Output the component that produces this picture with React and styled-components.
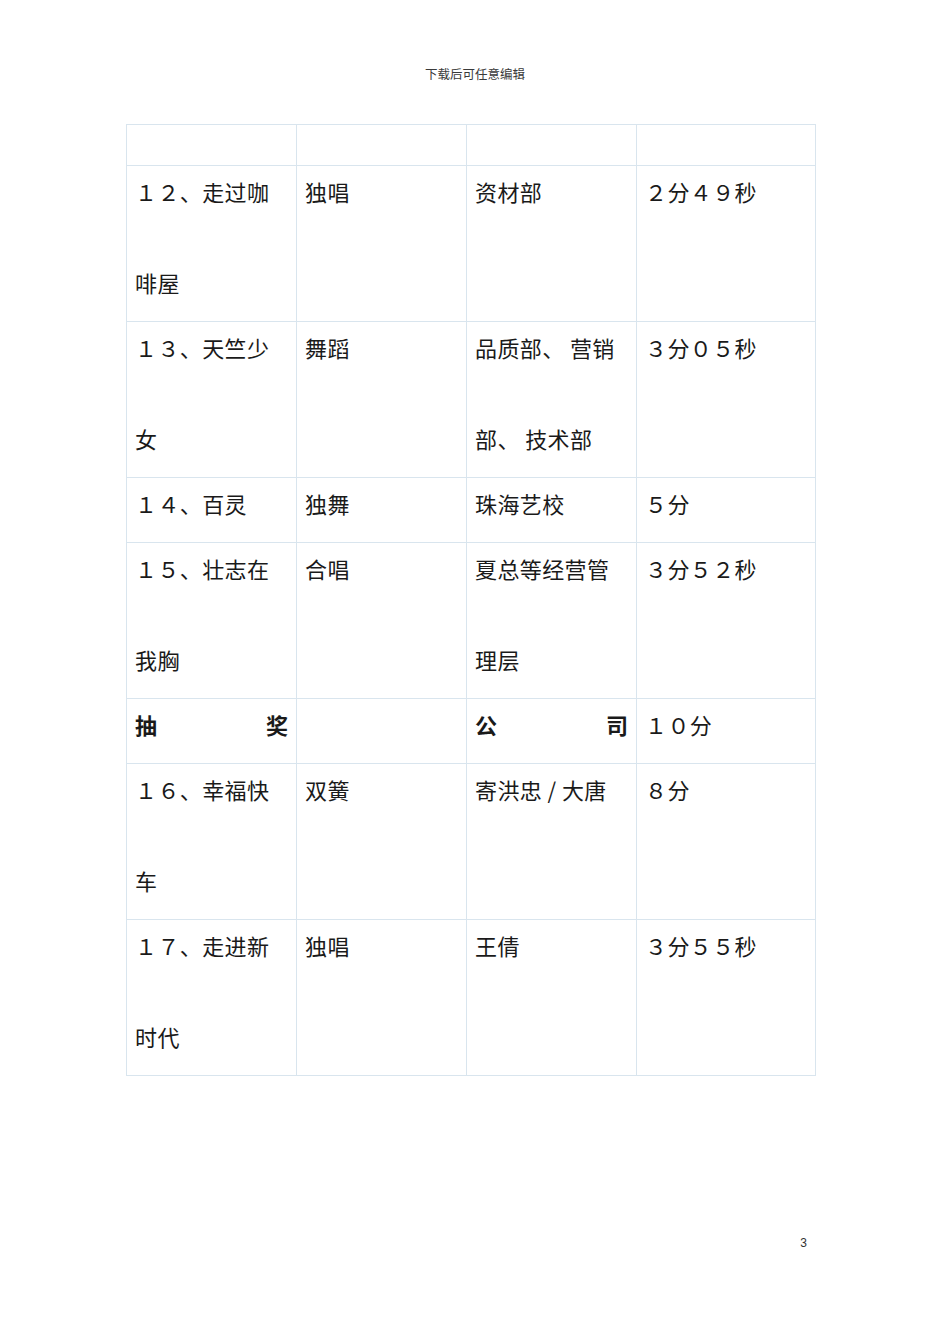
import React from "react";
import styled, { createGlobalStyle } from "styled-components";

const Global = createGlobalStyle`
  html, body { margin: 0; padding: 0; background: #ffffff; }
  body { font-family: "Noto Sans CJK SC", "Noto Sans", sans-serif; color: #1a1a1a; }
`;

const Page = styled.div`
  width: 950px;
  height: 1344px;
  display: flex;
  flex-direction: column;
  align-items: center;
  background: #fff;
`;

const Header = styled.div`
  margin-top: 66px;
  height: 18px;
  font-family: "Liberation Serif", "Noto Sans CJK SC", serif;
  font-size: 12.5px;
  line-height: 18px;
  color: #3a3a3a;
`;

const Table = styled.table`
  align-self: flex-start;
  margin-top: 40px;
  margin-left: 126px;
  border-collapse: collapse;
  table-layout: fixed;
  width: 689px;
`;

const Td = styled.td`
  border: 1px solid #d9e5ee;
  vertical-align: top;
  padding: ${(p) => (p.$empty ? "0" : "12px 8px 26px 8px")};
  font-size: 22px;
  line-height: 26px;
  height: ${(p) => (p.$empty ? "41px" : "auto")};
  box-sizing: border-box;
`;

const Lines = styled.div`
  display: flex;
  flex-direction: column;
  gap: 65px;
`;

const Line = styled.div`
  white-space: pre;
  letter-spacing: 0.4px;
`;

const Spread = styled.div`
  display: flex;
  justify-content: space-between;
  font-weight: 700;
  font-size: 22px;
  line-height: 26px;
`;

const Footer = styled.div`
  margin-top: auto;
  margin-bottom: 93px;
  align-self: flex-end;
  margin-right: 143px;
  font-family: "Liberation Sans", Arial, sans-serif;
  font-size: 12px;
  line-height: 16px;
  color: #333;
`;

const rows = [
  ["１２、走过咖|啡屋", "独唱", "资材部", "２分４９秒"],
  ["１３、天竺少|女", "舞蹈", "品质部、 营销|部、 技术部", "３分０５秒"],
  ["１４、百灵", "独舞", "珠海艺校", "５分"],
  ["１５、壮志在|我胸", "合唱", "夏总等经营管|理层", "３分５２秒"],
  [{ spread: ["抽", "奖"] }, "", { spread: ["公", "司"] }, "１０分"],
  ["１６、幸福快|车", "双簧", "寄洪忠 / 大唐", "８分"],
  ["１７、走进新|时代", "独唱", "王倩", "３分５５秒"],
];

function Cell({ value }) {
  if (value && typeof value === "object") {
    return (
      <Td>
        <Spread>
          <span>{value.spread[0]}</span>
          <span>{value.spread[1]}</span>
        </Spread>
      </Td>
    );
  }
  return (
    <Td>
      <Lines>
        {value.split("|").map((t, i) => (
          <Line key={i}>{t}</Line>
        ))}
      </Lines>
    </Td>
  );
}

export default function App() {
  return (
    <Page>
      <Global />
      <Header>下载后可任意编辑</Header>
      <Table>
        <colgroup>
          <col style={{ width: "170px" }} />
          <col style={{ width: "170px" }} />
          <col style={{ width: "170px" }} />
          <col style={{ width: "179px" }} />
        </colgroup>
        <tbody>
          <tr>
            <Td $empty />
            <Td $empty />
            <Td $empty />
            <Td $empty />
          </tr>
          {rows.map((r, i) => (
            <tr key={i}>
              {r.map((c, j) => (
                <Cell key={j} value={c} />
              ))}
            </tr>
          ))}
        </tbody>
      </Table>
      <Footer>3</Footer>
    </Page>
  );
}
